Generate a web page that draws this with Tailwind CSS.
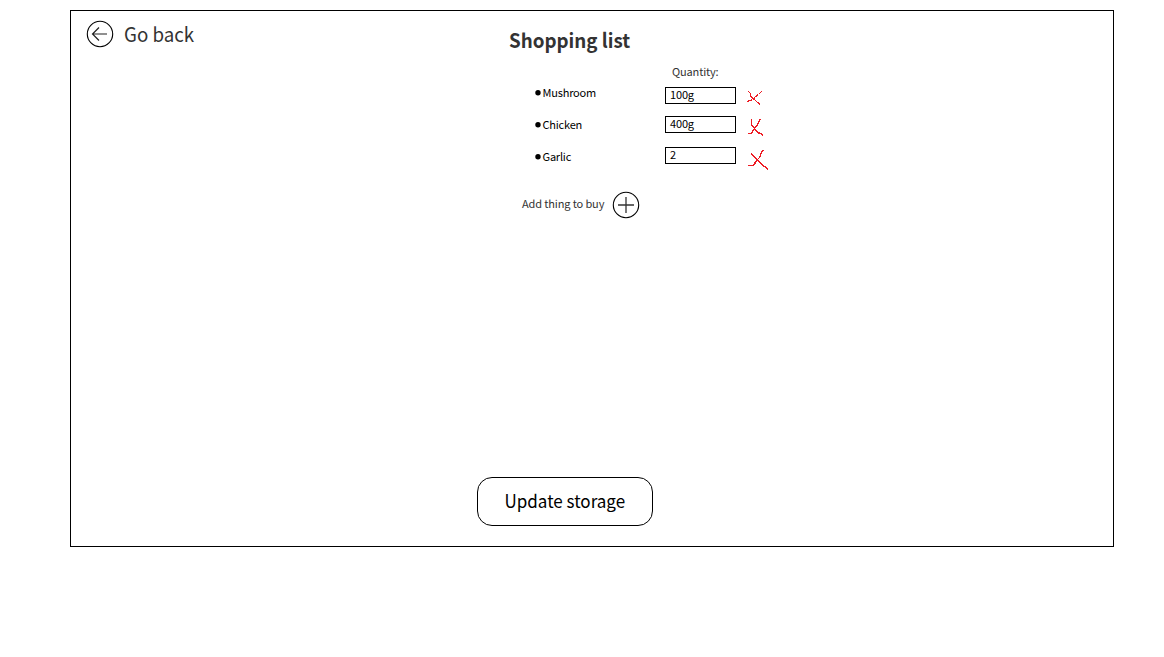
<!DOCTYPE html>
<html lang="en">
<head>
<meta charset="utf-8">
<title>Shopping list</title>
<script src="https://cdn.jsdelivr.net/npm/@tailwindcss/browser@4"></script>
</head>
<body class="bg-white font-['Noto_Sans_CJK_SC','Noto_Sans',sans-serif] text-black">
<main class="mt-[10px] ml-[70px] flex h-[537px] w-[1044px] border border-black">
  <nav class="w-[406px] pt-[9px] pl-[15px]">
    <a class="flex h-7 items-center gap-[10px] text-[20px] leading-7 text-[#333]">
      <svg class="size-7" viewBox="0 0 28 28" fill="none" stroke="#000"><circle cx="14" cy="14" r="12.7" stroke-width="1.1"/><path d="M21 14H7M13 7.5L6.5 14L13 20.5" stroke="#222" stroke-width="1.2"/></svg>
      <span class="origin-left scale-x-[0.937] whitespace-nowrap">Go back</span>
    </a>
  </nav>
  <section class="flex w-[310px] flex-col">
    <h1 class="mt-[15px] mb-px ml-[32px] h-7 origin-left scale-x-[0.938] text-[20px] leading-7 font-bold whitespace-nowrap text-[#333]">Shopping list</h1>
    <div class="flex h-[124px] tracking-[-0.15px]">
      <ul class="w-[188px] pt-[22px] pl-[57.5px] text-[11px] leading-[30px] tracking-[-0.2px]">
        <li class="flex h-8 items-center gap-[2px]"><svg class="size-[6px]" viewBox="0 0 6 6"><circle cx="3" cy="2.7" r="2.7"/></svg><span class="pb-[2px]">Mushroom</span></li>
        <li class="flex h-8 items-center gap-[2px]"><svg class="size-[6px]" viewBox="0 0 6 6"><circle cx="3" cy="2.7" r="2.7"/></svg><span class="pb-[2px]">Chicken</span></li>
        <li class="flex h-8 items-center gap-[2px]"><svg class="size-[6px]" viewBox="0 0 6 6"><circle cx="3" cy="2.7" r="2.7"/></svg><span class="pb-[2px]">Garlic</span></li>
      </ul>
      <div class="flex w-[71px] flex-col pt-[8px] text-[11px]">
        <span class="mb-[8px] h-4 pl-[7px] leading-4 text-[#333]">Quantity:</span>
        <div class="mb-[12px] h-[17px] border border-black pl-1 leading-[13px]">100g</div>
        <div class="mb-[14px] h-[17px] border border-black pl-1 leading-[13px]">400g</div>
        <div class="h-[17px] border border-black pl-1 leading-[13px]">2</div>
      </div>
      <svg class="mt-[30px] ml-[4px] h-[90px] w-[35px] shrink-0" viewBox="0 0 35 90" fill="none" stroke="#ed1c24" stroke-width="1.4" shape-rendering="crispEdges">
        <path d="M8.5 6.5L10.5 8.5V11.5L14.5 14.5L17.5 17.5L20.5 19.5M21.5 6.5L18.5 9.5L15.5 11.5L12.5 14.5L7.5 16.5M12 13.5H14.5"/>
        <path d="M11.5 34V39.5L14.5 43.5L17.5 47.5L20.5 48.5L23.5 50.5M20.5 34L17.5 39.5L15.5 42.5L13.5 44.5L11.5 48.5H8"/>
        <path d="M11.5 68L12.5 70.5L17.5 74.5L20.5 78.5L24.5 81.5L28.5 84.5M23.5 65.5L21.5 67.5L19.5 72.5L16.5 75.5L13.5 80.5H8"/>
      </svg>
    </div>
    <div class="mt-[12px] ml-[45px] flex h-7 items-center gap-2 text-[11px] tracking-[-0.13px] whitespace-nowrap text-[#333]">
      <span class="pb-[3px]">Add thing to buy</span>
      <svg class="size-7" viewBox="0 0 28 28" fill="none" stroke="#000"><circle cx="14" cy="14" r="12.7" stroke-width="1.1"/><path d="M6 14H22M14 6V22" stroke="#333" stroke-width="1.3"/></svg>
    </div>
    <button class="mt-auto mb-[20px] h-[49px] w-[176px] rounded-[15px] border border-black pb-[2px] text-[18px] whitespace-nowrap"><span class="inline-block scale-x-[0.945]">Update storage</span></button>
  </section>
</main>
</body>
</html>
